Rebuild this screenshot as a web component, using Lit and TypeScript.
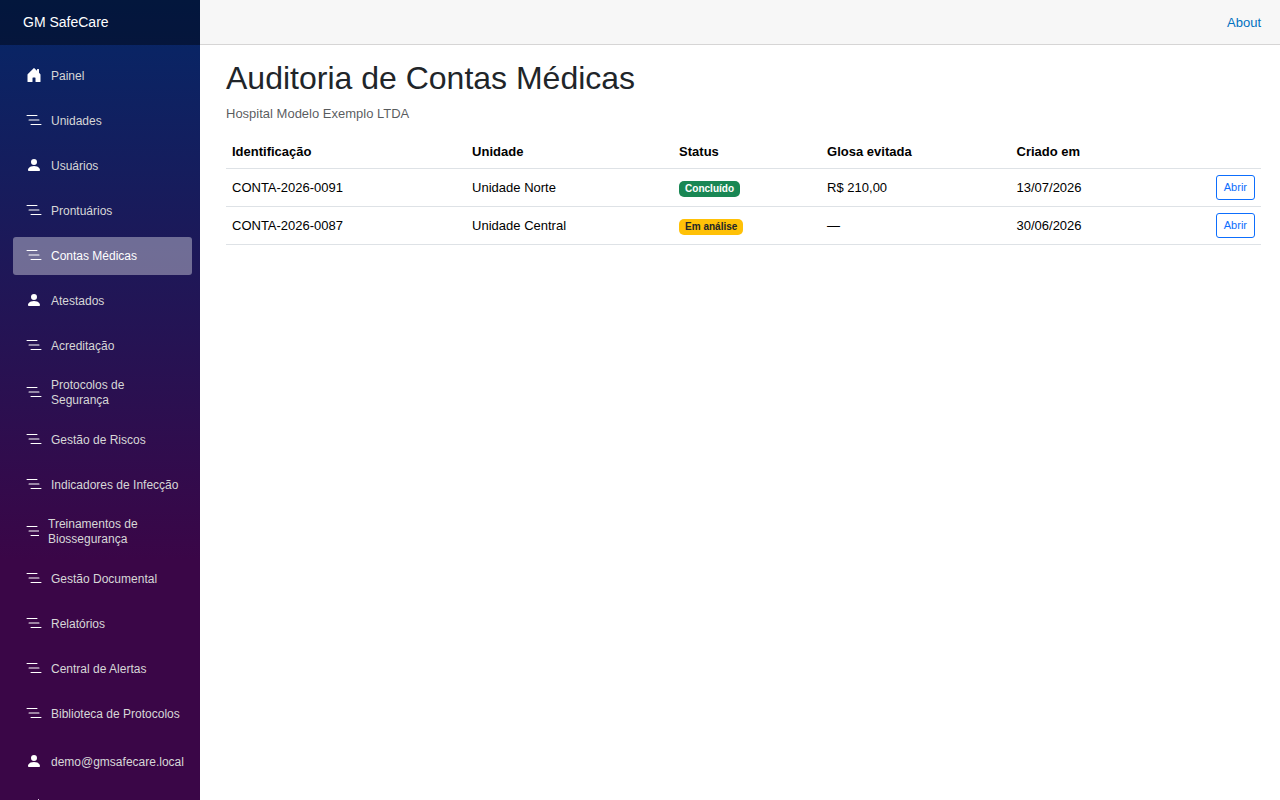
import { LitElement, html, css, svg, nothing } from "lit";
import { customElement } from "lit/decorators.js";
import { classMap } from "lit/directives/class-map.js";

type IconName = "home" | "list" | "person" | "logout";

interface NavItem {
  label: string;
  icon: IconName;
  active?: boolean;
  narrow?: boolean;
  iconOnly?: boolean;
}

interface Conta {
  id: string;
  unidade: string;
  status: string;
  done: boolean;
  glosa: string;
  criado: string;
}

const ICONS = {
  home: svg`<path d="M6.5 14.5v-3.505c0-.245.25-.495.5-.495h2c.25 0 .5.25.5.5v3.5a.5.5 0 0 0 .5.5h4a.5.5 0 0 0 .5-.5v-7a.5.5 0 0 0-.146-.354L13 5.793V2.5a.5.5 0 0 0-.5-.5h-1a.5.5 0 0 0-.5.5v1.293L8.354 1.146a.5.5 0 0 0-.708 0l-6 6A.5.5 0 0 0 1.5 7.5v7a.5.5 0 0 0 .5.5h4a.5.5 0 0 0 .5-.5Z"/>`,
  list: svg`<path fill-rule="evenodd" d="M4.5 12.5A.5.5 0 0 1 5 12h10a.5.5 0 0 1 0 1H5a.5.5 0 0 1-.5-.5zm-2-4.5A.5.5 0 0 1 3 7.500h10a.5.5 0 0 1 0 1H3a.5.5 0 0 1-.5-.5zm-2-4.500A.5.5 0 0 1 1 3h10a.5.5 0 0 1 0 1H1a.5.5 0 0 1-.5-.5z"/>`,
  person: svg`<path d="M3 14s-1 0-1-1 1-4 6-4 6 3 6 4-1 1-1 1H3Zm5-6a3 3 0 1 0 0-6 3 3 0 0 0 0 6Z"/>`,
  logout: svg`<path fill-rule="evenodd" d="M12.5 15a.5.5 0 0 1-.5-.5v-13a.5.5 0 0 1 1 0v13a.5.5 0 0 1-.5.5ZM10 8a.5.5 0 0 1-.5.5H3.707l2.147 2.146a.5.5 0 0 1-.708.708l-3-3a.5.5 0 0 1 0-.708l3-3a.5.5 0 1 1 .708.708L3.707 7.5H9.5a.5.5 0 0 1 .5.5Z"/>`,
};

const NAV: NavItem[] = [
  { label: "Painel", icon: "home" },
  { label: "Unidades", icon: "list" },
  { label: "Usuários", icon: "person" },
  { label: "Prontuários", icon: "list" },
  { label: "Contas Médicas", icon: "list", active: true },
  { label: "Atestados", icon: "person" },
  { label: "Acreditação", icon: "list" },
  { label: "Protocolos de Segurança", icon: "list" },
  { label: "Gestão de Riscos", icon: "list" },
  { label: "Indicadores de Infecção", icon: "list" },
  { label: "Treinamentos de Biossegurança", icon: "list", narrow: true },
  { label: "Gestão Documental", icon: "list" },
  { label: "Relatórios", icon: "list" },
  { label: "Central de Alertas", icon: "list" },
  { label: "Biblioteca de Protocolos", icon: "list" },
];

const ACCOUNT: NavItem[] = [
  { label: "demo@gmsafecare.local", icon: "person" },
  { label: "Sair", icon: "logout", iconOnly: true },
];

const CONTAS: Conta[] = [
  { id: "CONTA-2026-0091", unidade: "Unidade Norte", status: "Concluído", done: true, glosa: "R$ 210,00", criado: "13/07/2026" },
  { id: "CONTA-2026-0087", unidade: "Unidade Central", status: "Em análise", done: false, glosa: "—", criado: "30/06/2026" },
];

@customElement("gm-sidebar")
class GmSidebar extends LitElement {
  static styles = css`
    :host {
      display: flex;
      flex-direction: column;
      position: sticky;
      top: 0;
      height: 100vh;
      overflow: hidden;
      box-sizing: border-box;
      background: linear-gradient(180deg, rgb(5, 39, 103) 0%, #3a0647 70%);
    }
    .brand {
      flex: none;
      height: 45px;
      padding-left: 23px;
      display: flex;
      align-items: center;
      background: rgba(0, 0, 0, 0.4);
      color: #fff;
      font-size: 14px;
      text-decoration: none;
    }
    nav {
      flex: 1;
      min-height: 0;
      overflow-y: auto;
      scrollbar-width: none;
    }
    ul {
      list-style: none;
      margin: 0;
      padding: 12px 8px 0 13px;
      display: flex;
      flex-direction: column;
      gap: 7px;
    }
    .account {
      padding-top: 10px;
    }
    .link {
      display: flex;
      align-items: center;
      box-sizing: border-box;
      min-height: 38px;
      padding: 6px 8px 6px 13px;
      border-radius: 3px;
      color: #d7d7d7;
      font-size: 12px;
      line-height: 15px;
      text-decoration: none;
    }
    .link.active {
      background: rgba(255, 255, 255, 0.37);
      color: #fff;
    }
    .icon {
      flex: none;
      width: 16px;
      height: 16px;
      margin: 0 9px 2px 0;
      overflow: hidden;
      color: #fff;
    }
    .icon.narrow {
      width: 13px;
    }
    svg {
      display: block;
      width: 16px;
      height: 16px;
      fill: currentColor;
    }
  `;

  private item(i: NavItem) {
    return html`<li>
      <a
        href="#"
        class=${classMap({ link: true, active: !!i.active })}
        aria-label=${i.iconOnly ? i.label : nothing}
        aria-current=${i.active ? "page" : nothing}
      >
        <span class=${classMap({ icon: true, narrow: !!i.narrow })}>
          <svg viewBox="0 0 16 16" aria-hidden="true">${ICONS[i.icon]}</svg>
        </span>
        ${i.iconOnly ? nothing : html`<span>${i.label}</span>`}
      </a>
    </li>`;
  }

  render() {
    return html`
      <a class="brand" href="#">GM SafeCare</a>
      <nav>
        <ul>${NAV.map((i) => this.item(i))}</ul>
        <ul class="account">${ACCOUNT.map((i) => this.item(i))}</ul>
      </nav>
    `;
  }
}

@customElement("app-root")
class AppRoot extends LitElement {
  static styles = css`
    :host {
      display: grid;
      grid-template-columns: 200px minmax(0, 1fr);
      align-items: start;
      min-height: 100vh;
      background: #fff;
      color: #212529;
      font-family: "Liberation Sans", Arial, sans-serif;
      font-size: 13px;
      line-height: 19px;
    }
    .top {
      display: flex;
      align-items: center;
      justify-content: flex-end;
      height: 44px;
      padding: 0 19px 0 26px;
      border-bottom: 1px solid #d6d5d5;
      background: #f7f7f7;
    }
    .top a {
      color: #0071c1;
      text-decoration: none;
    }
    article {
      padding: 14px 19px 0 26px;
    }
    h1 {
      margin: 0 0 7px;
      font-size: 32px;
      line-height: 38px;
      font-weight: 400;
    }
    p {
      margin: 0 0 13px;
      color: rgba(33, 37, 41, 0.75);
    }
    table {
      width: 100%;
      border-collapse: collapse;
      color: #000;
      line-height: 20px;
    }
    th,
    td {
      padding: 6px;
      border-bottom: 1px solid #dee2e6;
      text-align: left;
      vertical-align: middle;
    }
    .c1 { width: 23.2%; }
    .c2 { width: 20%; }
    .c3 { width: 14.3%; }
    .c4 { width: 18.3%; }
    .c5 { width: 18.7%; }
    .badge {
      display: inline-block;
      padding: 3px 6px;
      border-radius: 5px;
      background: #ffc107;
      color: #212529;
      font-size: 10px;
      font-weight: 700;
      line-height: 10px;
    }
    .badge.done {
      background: #198754;
      color: #fff;
    }
    .action {
      text-align: right;
    }
    button {
      display: inline-block;
      padding: 3px 7px;
      border: 1px solid #0d6efd;
      border-radius: 3px;
      background: transparent;
      color: #0d6efd;
      font-family: inherit;
      font-size: 11px;
      line-height: 17px;
      vertical-align: top;
      cursor: pointer;
    }
  `;

  render() {
    return html`
      <gm-sidebar></gm-sidebar>
      <main>
        <div class="top"><a href="#">About</a></div>
        <article>
          <h1>Auditoria de Contas Médicas</h1>
          <p>Hospital Modelo Exemplo LTDA</p>
          <table>
            <thead>
              <tr>
                <th class="c1">Identificação</th>
                <th class="c2">Unidade</th>
                <th class="c3">Status</th>
                <th class="c4">Glosa evitada</th>
                <th class="c5">Criado em</th>
                <th></th>
              </tr>
            </thead>
            <tbody>
              ${CONTAS.map(
                (c) => html`<tr>
                  <td>${c.id}</td>
                  <td>${c.unidade}</td>
                  <td><span class=${classMap({ badge: true, done: c.done })}>${c.status}</span></td>
                  <td>${c.glosa}</td>
                  <td>${c.criado}</td>
                  <td class="action"><button type="button">Abrir</button></td>
                </tr>`
              )}
            </tbody>
          </table>
        </article>
      </main>
    `;
  }
}
